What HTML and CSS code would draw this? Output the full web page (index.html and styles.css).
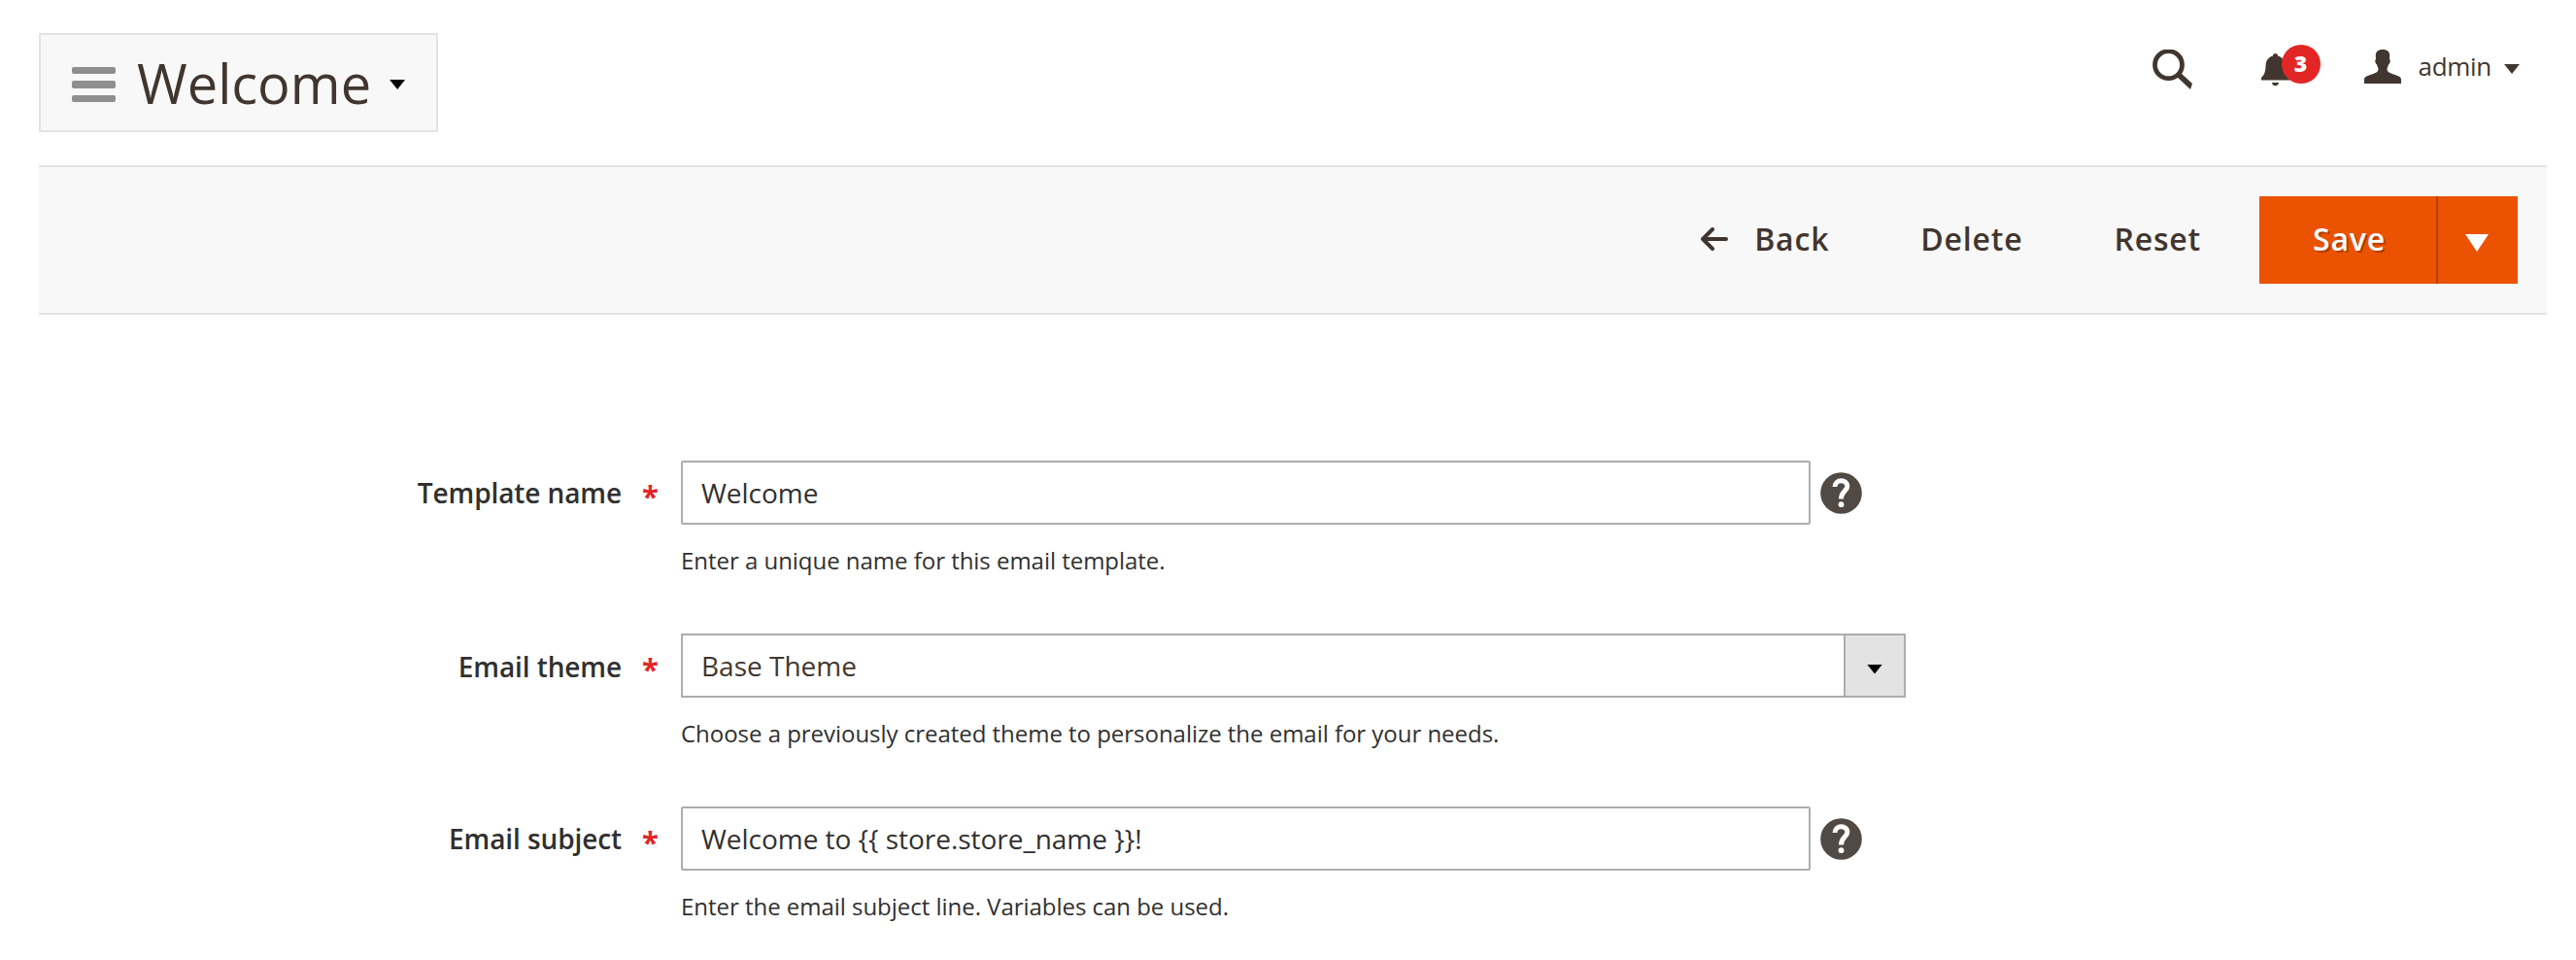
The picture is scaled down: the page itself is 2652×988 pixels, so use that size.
FILE: index.html
```html
<!DOCTYPE html>
<html lang="en">
  <head>
    <meta charset="UTF-8" />
    <meta name="viewport" content="width=device-width, initial-scale=1.0" />
    <title>Welcome</title>
    <link rel="stylesheet" href="styles.css">
  </head>
  <body>
    <header class="page_header">
      <button type="button" class="title_switch">
        <span class="burger"><i></i><i></i><i></i></span>
        <span class="title">Welcome</span>
        <span class="caret"></span>
      </button>

      <div class="header_tools">
        <a href="#" class="search" aria-label="Search">
          <svg width="42" height="42" viewBox="0 0 42 42">
            <circle cx="16.5" cy="15.700" r="14" fill="none" stroke="#41362f" stroke-width="4.800" />
            <path d="M24.5 27.5 L28.5 23.500 L41 35 L39 41 Z" fill="#41362f" />
          </svg>
        </a>
        <a href="#" class="notice" aria-label="Notifications">
          <svg width="30" height="34" viewBox="0 0 30 34">
            <path d="M14.5 0 C16.2 0 17.2 1.2 17 2.6 C22 4 24 7.5 24.4 12 C24.8 18 25 21 29 25 V27.5 H0 V25 C4 21 4.2 18 4.6 12 C5 7.5 7 4 12 2.6 C11.8 1.2 12.8 0 14.5 0 Z M11 30 H18 C17.6 34.3 11.4 34.3 11 30 Z" fill="#41362f" />
          </svg>
          <span class="badge">3</span>
        </a>
        <a href="#" class="user">
          <svg width="38" height="35" viewBox="0 0 38 35">
            <path d="M19 0 C24 0 26.5 2.5 26.2 7 L26 10 C27.5 11 26.5 14.5 25 15.5 C24.6 17.5 23.5 18.5 23.5 20 C23.5 24 28 24.5 33 26.5 C37 28 38 29 38 31 V35 H0 V31 C0 29 1 28 5 26.5 C10 24.5 14.5 24 14.5 20 C14.5 18.5 13.4 17.5 13 15.5 C11.5 14.5 10.5 11 12 10 L11.8 7 C11.5 2.5 14 0 19 0 Z" fill="#41362f" />
          </svg>
          <span class="name">admin</span>
          <span class="caret"></span>
        </a>
      </div>
    </header>

    <div class="page_actions">
      <button type="button" class="action back">
        <svg width="28" height="24" viewBox="0 0 28 24">
          <path d="M2 12 H26 M12 2 L2 12 L12 22" fill="none" stroke="#41362f" stroke-width="4" stroke-linecap="round" stroke-linejoin="round" />
        </svg>
        <span>Back</span>
      </button>
      <button type="button" class="action delete">Delete</button>
      <button type="button" class="action reset">Reset</button>
      <div class="save_group">
        <button type="button" class="save">Save</button>
        <button type="button" class="save_toggle" aria-label="More"><span class="caret"></span></button>
      </div>
    </div>

    <form class="template_form">
      <div class="field">
        <label for="name">Template name</label>
        <span class="required">*</span>
        <div class="control">
          <div class="row">
            <input type="text" id="name" value="Welcome" />
            <svg class="help" width="43" height="43" viewBox="0 0 43 43">
              <circle cx="21.5" cy="21.5" r="21.3" fill="#514943" />
              <path d="M15 15 C15 6.8 28 6.800 27.800 14.500 C27.600 19.500 21.500 19.500 21.500 27.500" fill="none" stroke="#fff" stroke-width="5" />
              <circle cx="21.5" cy="33.200" r="2.900" fill="#fff" />
            </svg>
          </div>
          <p class="note">Enter a unique name for this email template.</p>
        </div>
      </div>

      <div class="field field_select">
        <label for="theme">Email theme</label>
        <span class="required">*</span>
        <div class="control">
          <div class="row">
            <button type="button" class="select" id="theme">
              <span class="value">Base Theme</span>
              <span class="toggle"><span class="caret"></span></span>
            </button>
          </div>
          <p class="note">Choose a previously created theme to personalize the email for your needs.</p>
        </div>
      </div>

      <div class="field">
        <label for="subject">Email subject</label>
        <span class="required">*</span>
        <div class="control">
          <div class="row">
            <input type="text" id="subject" value="Welcome to {{ store.store_name }}!" />
            <svg class="help" width="43" height="43" viewBox="0 0 43 43">
              <circle cx="21.5" cy="21.5" r="21.3" fill="#514943" />
              <path d="M15 15 C15 6.8 28 6.800 27.800 14.500 C27.600 19.500 21.500 19.500 21.500 27.500" fill="none" stroke="#fff" stroke-width="5" />
              <circle cx="21.5" cy="33.200" r="2.900" fill="#fff" />
            </svg>
          </div>
          <p class="note">Enter the email subject line. Variables can be used.</p>
        </div>
      </div>
    </form>
  </body>
</html>
```

FILE: styles.css
```css
* {
  margin: 0;
  padding: 0;
  box-sizing: border-box;
}
body {
  background: #fff;
  color: #303030;
  font-family: "Open Sans", "Noto Sans", sans-serif;
  font-size: 28px;
  padding: 34px 30px 0 40px;
  overflow: hidden;
}
a {
  color: #41362f;
  text-decoration: none;
}
button,
input {
  font-family: inherit;
  border: 0;
  background: none;
}
svg {
  display: block;
  flex: none;
}
.caret {
  width: 16px;
  height: 10px;
  background: #000;
  clip-path: polygon(0 0, 100% 0, 50% 100%);
}

/* header */
.page_header {
  display: flex;
  justify-content: space-between;
  align-items: flex-start;
  height: 136px;
}
.title_switch {
  display: flex;
  align-items: center;
  width: 411px;
  height: 102px;
  padding-left: 32px;
  border: 2px solid #e3e3e3;
  background: #f8f8f8;
}
.burger {
  display: grid;
  gap: 7.5px;
  width: 45px;
  padding-top: 4px;
}
.burger i {
  height: 7.3px;
  border-radius: 2px;
  background: #8f8f8f;
}
.title {
  margin-left: 22px;
  font-size: 56px;
  line-height: 98px;
  color: #41362f;
}
.title_switch .caret {
  margin-left: 19px;
  margin-top: 4px;
}
.header_tools {
  display: flex;
  padding-right: 28px;
}
.search {
  padding-top: 17px;
}
.notice {
  position: relative;
  margin-left: 70px;
  padding-top: 21px;
}
.badge {
  position: absolute;
  top: 12px;
  left: 21px;
  width: 40px;
  height: 40px;
  border-radius: 50%;
  background: #e22626;
  color: #fff;
  font-size: 23px;
  font-weight: 800;
  line-height: 39px;
  text-align: center;
}
.user {
  display: flex;
  margin-left: 76px;
  padding-top: 17px;
}
.user .name {
  margin-left: 18px;
  font-size: 26px;
  line-height: 34px;
  letter-spacing: -0.3px;
}
.user .caret {
  margin: 15px 0 0 13px;
  background: #41362f;
}

/* action bar */
.page_actions {
  display: flex;
  justify-content: flex-end;
  align-items: center;
  height: 154px;
  padding-right: 30px;
  border-top: 2px solid #e3e3e3;
  border-bottom: 2px solid #e3e3e3;
  background: #f8f8f8;
}
.action,
.save {
  padding-bottom: 2px;
  font-size: 32px;
  font-weight: 600;
  line-height: 44px;
  letter-spacing: 0.8px;
  color: #41362f;
}
.action {
  margin-right: 94px;
}
.back {
  display: flex;
  align-items: center;
  gap: 27px;
}
.reset {
  margin-right: 60px;
}
.save_group {
  display: flex;
  width: 266px;
  height: 90px;
  background: #eb5202;
}
.save {
  width: 184px;
  padding-left: 3px;
  border-right: 2px solid #b84002;
  color: #fff;
  text-shadow: 2px 2px 0 rgba(0, 0, 0, 0.25);
}
.save_toggle {
  display: flex;
  flex: 1;
  align-items: center;
  justify-content: center;
  padding-right: 2px;
}
.save_toggle .caret {
  width: 24px;
  height: 18px;
  margin-top: 6px;
  background: #fff;
}

/* form */
.template_form {
  padding-top: 150px;
}
.field {
  display: flex;
  height: 178px;
}
.field label {
  width: 600px;
  font-weight: 600;
  line-height: 66px;
  letter-spacing: -0.1px;
  text-align: right;
}
.field_select label {
  line-height: 68px;
}
.required {
  width: 61px;
  padding-left: 21px;
  color: #e22626;
  font-size: 31px;
  font-weight: 700;
  line-height: 72px;
}
.row {
  display: flex;
  align-items: center;
  gap: 10px;
}
.field input {
  width: 1163px;
  height: 66px;
  padding: 0 19px;
  border: 2px solid #adadad;
  border-radius: 2px;
  color: #303030;
  font-size: 28px;
  letter-spacing: -0.03px;
}
.select {
  display: flex;
  justify-content: space-between;
  width: 1261px;
  height: 66px;
  border: 2px solid #adadad;
  color: #41362f;
  font-size: 28px;
  line-height: 62px;
}
.select .value {
  padding-left: 19px;
}
.select .toggle {
  display: flex;
  align-items: center;
  justify-content: center;
  width: 62px;
  border-left: 2px solid #adadad;
  background: #e3e3e3;
}
.select .caret {
  margin-top: 7px;
}
.note {
  padding-top: 20px;
  font-size: 24px;
  line-height: 34px;
  letter-spacing: -0.03px;
}
```
